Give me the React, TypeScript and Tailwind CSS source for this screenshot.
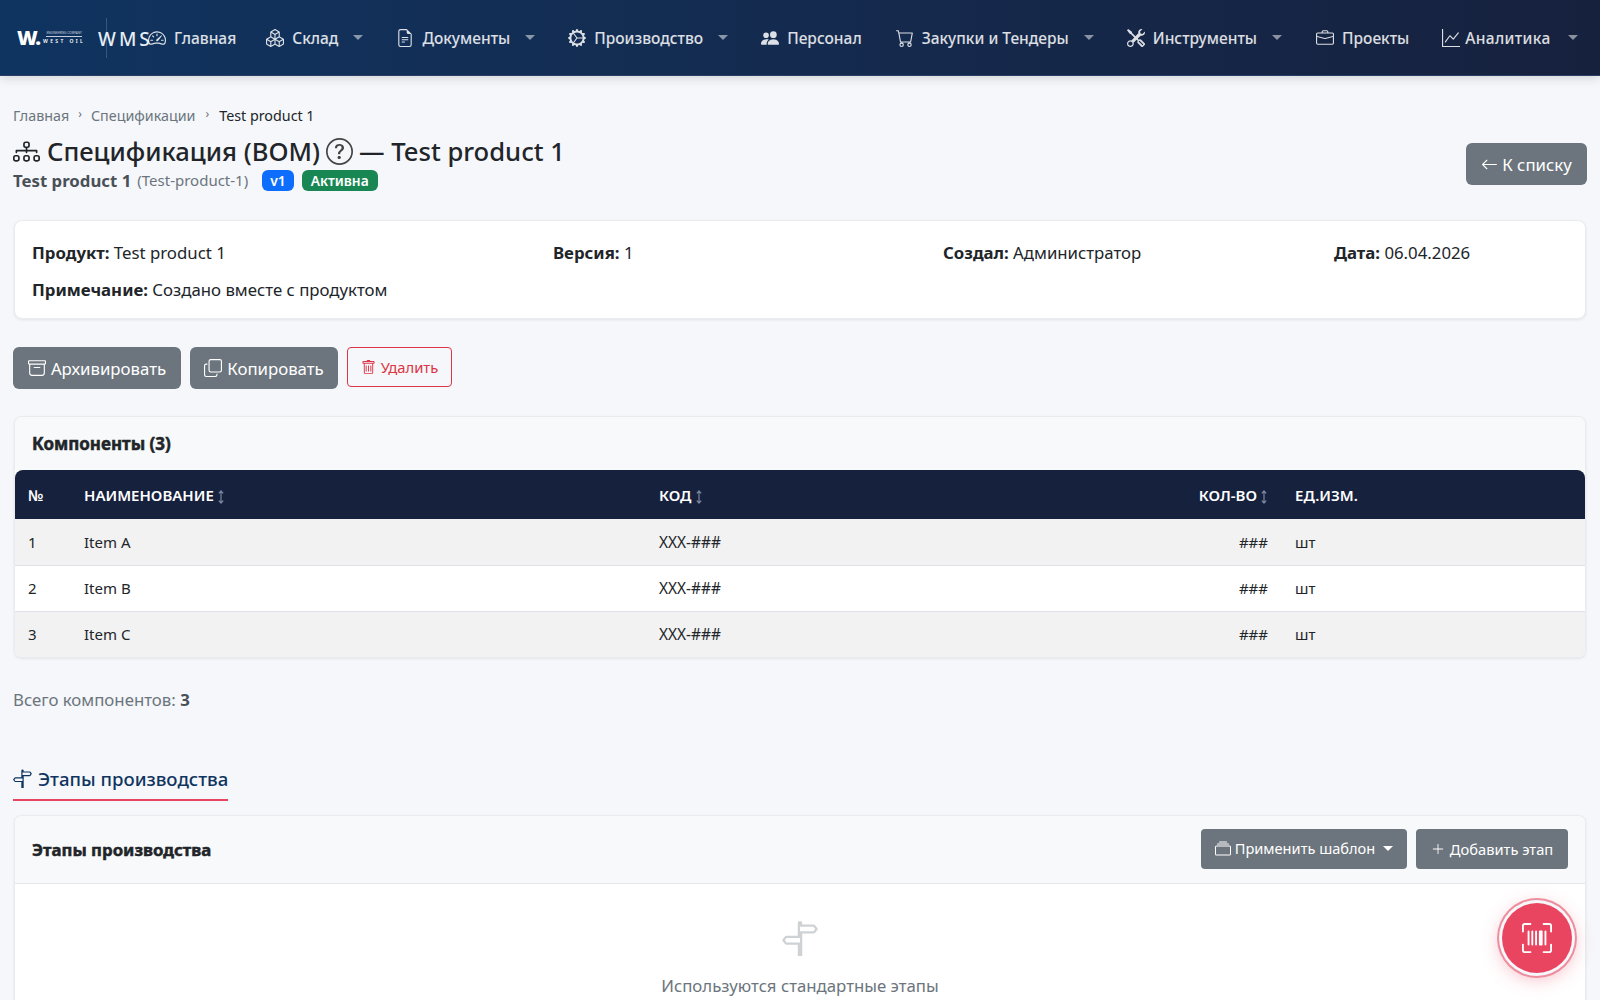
import {
  BsSpeedometer2,
  BsBoxes,
  BsFileEarmarkText,
  BsGearWideConnected,
  BsPeopleFill,
  BsCart,
  BsTools,
  BsBriefcase,
  BsGraphUp,
  BsDiagram3,
  BsQuestionCircle,
  BsArrowLeft,
  BsArchive,
  BsCopy,
  BsTrash,
  BsSignpostSplit,
  BsCollection,
  BsPlusLg,
  BsUpcScan,
} from "react-icons/bs";
import type { IconType } from "react-icons";

const navItems: {
  label: string;
  icon: IconType;
  caret?: boolean;
  item?: string;
  iconGap?: string;
  text?: string;
}[] = [
  { label: "Главная", icon: BsSpeedometer2 },
  { label: "Склад", icon: BsBoxes, caret: true },
  { label: "Документы", icon: BsFileEarmarkText, caret: true },
  { label: "Производство", icon: BsGearWideConnected, caret: true },
  { label: "Персонал", icon: BsPeopleFill, item: "pr-[19px]" },
  { label: "Закупки и Тендеры", icon: BsCart, caret: true },
  { label: "Инструменты", icon: BsTools, caret: true, item: "pr-[16px]" },
  { label: "Проекты", icon: BsBriefcase, item: "pr-[18px]" },
  {
    label: "Аналитика",
    icon: BsGraphUp,
    caret: true,
    iconGap: "mr-[5px]",
    text: "tracking-[0.35px]",
  },
];

const rows = [
  { n: 1, name: "Item A" },
  { n: 2, name: "Item B" },
  { n: 3, name: "Item C" },
];

const Caret = ({ className }: { className: string }) => (
  <span
    className={`inline-block h-0 w-0 border-x-[5px] border-t-[5px] border-x-transparent ${className}`}
  />
);

const SortMark = () => (
  <svg
    viewBox="0 0 8 14"
    className="ml-[3px] inline-block h-[14px] w-[8px] align-[-3px] text-[#7c88a1]"
    fill="none"
    stroke="currentColor"
    strokeWidth="1.2"
  >
    <path d="M4 1v12M1.8 3.4 4 1l2.2 2.4M1.8 10.6 4 13l2.2-2.4" />
  </svg>
);

const Navbar = () => (
  <nav className="flex h-[76px] shrink-0 items-center border-b border-[#2a3f66] bg-gradient-to-r from-[#0f3460] to-[#16213e] shadow-[0_2px_10px_rgba(0,0,0,0.15)]">
    <div className="ml-[17px] flex h-[40px] w-[90px] shrink-0 items-center border-r border-[#37557f] text-white">
      <span className="text-[20px] leading-none font-black tracking-[-1.5px]">
        W.
      </span>
      <div className="ml-[3px] flex w-[43px] flex-col items-center leading-none">
        <span className="border-b border-[#c7d0dd] pb-[1px] text-[3px] whitespace-nowrap text-[#c7d0dd]">
          ENGINEERING COMPANY
        </span>
        <span className="mt-[2px] text-[5px] font-semibold tracking-[2.4px] whitespace-nowrap">
          WEST OIL
        </span>
      </div>
    </div>
    <span className="mt-[3px] ml-[-9px] w-[52px] shrink-0 text-[19px] font-medium tracking-[3px] text-[#e8edf4]">
      WMS
    </span>
    <div className="mt-[3px] ml-[-17px] flex items-center">
      {navItems.map(({ label, icon: Icon, caret, item, iconGap, text }) => (
        <div
          key={label}
          className={`flex items-center px-[15px] text-[15.5px] font-medium whitespace-nowrap text-white/85 ${item ?? ""}`}
        >
          <Icon className={`-translate-y-[1px] text-[18px] ${iconGap ?? "mr-2"}`} />
          <span className={text}>{label}</span>
          {caret && (
            <Caret
              className={`mr-[3px] -translate-y-[2px] border-t-white/50 ${label === "Аналитика" ? "ml-[17px]" : "ml-[15px]"}`}
            />
          )}
        </div>
      ))}
    </div>
  </nav>
);

const App = () => {
  return (
    <div className="relative flex h-screen flex-col overflow-hidden bg-[#f5f7fa] font-['Noto_Sans',sans-serif] text-[16.8px] text-[#212529]">
      <Navbar />

      <main className="flex flex-col px-[13px]">
        <div className="mt-[29px] flex items-center text-[14.3px] text-[#6c757d]">
          Главная
          <span className="mx-[9px] -translate-y-[2px] text-[12px]">›</span>
          Спецификации
          <span className="mx-[10px] -translate-y-[2px] text-[12px]">›</span>
          <span className="text-[#212529]">Test product 1</span>
        </div>

        <div className="flex items-start justify-between">
          <div>
            <h3 className="mt-[7px] flex h-[36px] items-center text-[25.6px] leading-none font-medium">
              <BsDiagram3 className="mr-[7px] text-[27px]" />
              Спецификация (BOM)
              <BsQuestionCircle className="mx-[6px] text-[27px] text-[#444]" />—
              Test product 1
            </h3>
            <div className="flex h-[22px] items-center text-[#6c757d]">
              <span className="font-bold text-[#495057]">Test product 1</span>
              <span className="ml-[6px] text-[15px]">(Test-product-1)</span>
              <span className="ml-[14px] rounded-[6px] bg-[#0d6efd] px-[8px] py-[4px] text-[13.8px] leading-none font-semibold text-white">
                v1
              </span>
              <span className="ml-[8px] rounded-[6px] bg-[#198754] px-[9px] py-[4px] text-[13.8px] leading-none font-semibold text-white">
                Активна
              </span>
            </div>
          </div>
          <button className="mt-[17px] flex h-[42px] w-[121px] items-center justify-center rounded-[6px] bg-[#6c757d] text-white">
            <BsArrowLeft className="mr-[4px] text-[17px]" />К списку
          </button>
        </div>

        <section className="mx-[1px] mt-[29px] h-[99px] rounded-[8px] border border-[#e9ecef] bg-white px-[17px] pt-[19px] shadow-[0_1px_3px_rgba(0,0,0,0.08)]">
          <div className="grid grid-cols-[521px_390px_391px_1fr]">
            <p>
              <b className="font-bold">Продукт:</b> Test product 1
            </p>
            <p>
              <b className="font-bold">Версия:</b> 1
            </p>
            <p>
              <b className="font-bold">Создал:</b> Администратор
            </p>
            <p>
              <b className="font-bold">Дата:</b> 06.04.2026
            </p>
          </div>
          <p className="mt-[11px]">
            <b className="font-bold">Примечание:</b> Создано вместе с продуктом
          </p>
        </section>

        <div className="mt-[28px] flex items-start gap-[9px]">
          <button className="flex h-[42px] w-[168px] items-center justify-center rounded-[6px] bg-[#6c757d] text-white">
            <BsArchive className="mr-[5px] text-[18px]" />
            Архивировать
          </button>
          <button className="flex h-[42px] w-[148px] items-center justify-center rounded-[6px] bg-[#6c757d] text-white">
            <BsCopy className="mr-[5px] text-[18px]" />
            Копировать
          </button>
          <button className="flex h-[40px] w-[105px] items-center justify-center rounded-[4px] border border-[#dc3545] text-[14.8px] text-[#dc3545]">
            <BsTrash className="mr-[5px] text-[15px]" />
            Удалить
          </button>
        </div>

        <section className="mx-[1px] mt-[27px] overflow-hidden rounded-[8px] border border-[#e9ecef] bg-white shadow-[0_1px_3px_rgba(0,0,0,0.08)]">
          <h5 className="flex h-[53px] items-center bg-[#f8f9fa] px-[17px] text-[17px] font-bold [-webkit-text-stroke:0.5px_#212529]">
            Компоненты (3)
          </h5>
          <table className="w-full table-fixed border-collapse text-[15px]">
            <colgroup>
              <col className="w-[55px]" />
              <col className="w-[575px]" />
              <col className="w-[400px]" />
              <col className="w-[236px]" />
              <col />
            </colgroup>
            <thead>
              <tr className="h-[49px] rounded-t-[8px] bg-[#16213e] text-left text-white uppercase">
                <th className="rounded-tl-[8px] px-[13px] font-semibold">№</th>
                <th className="px-[14px] font-semibold">
                  Наименование
                  <SortMark />
                </th>
                <th className="px-[14px] font-semibold">
                  Код
                  <SortMark />
                </th>
                <th className="pr-[13px] text-right font-semibold">
                  Кол-во
                  <SortMark />
                </th>
                <th className="rounded-tr-[8px] px-[14px] font-semibold">
                  Ед.изм.
                </th>
              </tr>
            </thead>
            <tbody>
              {rows.map((row) => (
                <tr
                  key={row.n}
                  className={`h-[46px] border-b border-[#dee2e6] last:border-b-0 ${row.n % 2 === 1 ? "bg-[#f2f2f2]" : "bg-white"}`}
                >
                  <td className="px-[13px]">{row.n}</td>
                  <td className="px-[14px]">{row.name}</td>
                  <td className="px-[14px] text-[15.4px]">XXX-###</td>
                  <td className="pr-[13px] text-right">###</td>
                  <td className="px-[14px]">шт</td>
                </tr>
              ))}
            </tbody>
          </table>
        </section>

        <p className="mt-[29px] text-[#6c757d]">
          Всего компонентов: <b className="font-bold text-[#495057]">3</b>
        </p>

        <div className="mt-[52px] flex">
          <div className="flex h-[36px] items-start border-b-2 border-[#e94560] text-[18.6px] font-medium text-[#0f3460]">
            <BsSignpostSplit className="mt-[4px] mr-[6px] text-[19px]" />
            Этапы производства
          </div>
        </div>

        <section className="mx-[1px] mt-[14px] rounded-[8px] border border-[#e9ecef] bg-white shadow-[0_1px_3px_rgba(0,0,0,0.08)]">
          <div className="flex h-[68px] items-center justify-between rounded-t-[8px] border-b border-[#e3e6ea] bg-[#f8f9fa] px-[17px] pb-[1px]">
            <h5 className="translate-y-[1px] text-[16.8px] font-bold [-webkit-text-stroke:0.5px_#212529]">
              Этапы производства
            </h5>
            <div className="flex gap-[9px]">
              <button className="flex h-[40px] w-[206px] items-center justify-center rounded-[4px] bg-[#6c757d] text-[14.6px] text-white">
                <BsCollection className="mr-[4px] text-[16px]" />
                Применить шаблон
                <Caret className="ml-[8px] border-t-white" />
              </button>
              <button className="flex h-[40px] w-[152px] items-center justify-center rounded-[4px] bg-[#6c757d] text-[14.7px] text-white">
                <BsPlusLg className="mr-[5px] text-[14px]" />
                Добавить этап
              </button>
            </div>
          </div>
          <div className="flex flex-col items-center pt-[36px] pb-[20px]">
            <BsSignpostSplit className="text-[36px] text-[#cfd2d5]" />
            <p className="mt-[17px] text-[#6c757d]">
              Используются стандартные этапы
            </p>
          </div>
        </section>
      </main>

      <button className="absolute top-[903px] left-[1502px] flex h-[70px] w-[70px] items-center justify-center rounded-full bg-[#e94560] text-white shadow-[0_0_0_3px_#f5f7fa,0_0_0_5px_#ee8d9d,0_4px_20px_rgba(233,69,96,0.45)]">
        <BsUpcScan className="text-[30px]" />
      </button>
    </div>
  );
};

export default App;
